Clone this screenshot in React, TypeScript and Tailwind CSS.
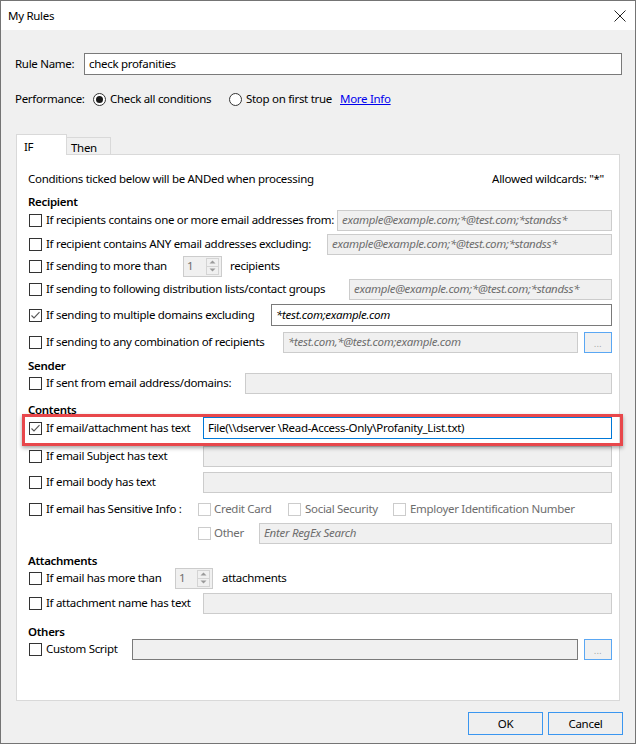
import React from "react";

function Check({ checked = false, disabled = false }: { checked?: boolean; disabled?: boolean }) {
  return (
    <span
      className={
        "w-[13px] h-[13px] shrink-0 border bg-white flex items-center justify-center " +
        (disabled ? "border-[#cccccc]" : "border-[#333333]")
      }
    >
      {checked && (
        <svg width="11" height="11" viewBox="0 0 11 11">
          <path d="M1.5 5.5 L4 8 L9.5 2.2" fill="none" stroke="#555555" strokeWidth="1.1" />
        </svg>
      )}
    </span>
  );
}

function Radio({ checked = false }: { checked?: boolean }) {
  return (
    <span className="w-[13px] h-[13px] shrink-0 rounded-full border border-[#333333] bg-white flex items-center justify-center">
      {checked && <span className="w-[7px] h-[7px] rounded-full bg-[#1a1a1a]" />}
    </span>
  );
}

function DisabledField({ className, text }: { className: string; text?: string }) {
  return (
    <div
      className={
        "h-[21px] shrink-0 border border-[#cccccc] bg-[#f0f0f0] flex items-center pl-[4px] italic text-[#6d6d6d] whitespace-nowrap overflow-hidden " +
        className
      }
    >
      {text}
    </div>
  );
}

function Spinner({ className }: { className: string }) {
  return (
    <div className={"h-[21px] shrink-0 border border-[#cccccc] bg-[#f0f0f0] flex items-stretch " + className}>
      <span className="flex-1 pl-[3px] text-[#6d6d6d] leading-[18px]">1</span>
      <span className="w-[13px] my-[1px] mr-[2px] flex flex-col border border-[#d4d4d4]">
        <span className="flex-1 flex items-center justify-center border-b border-[#d4d4d4]">
          <svg width="7" height="4" viewBox="0 0 7 4">
            <path d="M0.5 3.5 L3.5 0.5 L6.5 3.5 Z" fill="#9a9a9a" />
          </svg>
        </span>
        <span className="flex-1 flex items-center justify-center">
          <svg width="7" height="4" viewBox="0 0 7 4">
            <path d="M0.5 0.5 L3.5 3.5 L6.5 0.5 Z" fill="#9a9a9a" />
          </svg>
        </span>
      </span>
    </div>
  );
}

function DotsButton() {
  return (
    <div className="ml-[6px] w-[28px] h-[21px] shrink-0 border border-[#5aa7f3] bg-[#f0f0f0] flex items-end justify-center pb-[4px]">
      <span className="text-[8px] leading-[8px] text-[#9a9a9a] tracking-[0.5px]">...</span>
    </div>
  );
}

export default function App() {
  return (
    <div className="w-[636px] h-[744px] border border-[#747474] bg-[#f0f0f0] flex flex-col font-['Noto_Sans',sans-serif] text-[11.5px] tracking-[-0.3px] text-black leading-none overflow-hidden whitespace-nowrap">
      {/* Title bar */}
      <div className="h-[29px] bg-white flex items-center justify-between pl-[7px] pr-[9px] shrink-0">
        <span>My Rules</span>
        <svg width="12" height="12" viewBox="0 0 12 12">
          <path d="M0.5 0.5 L11.5 11.5 M11.5 0.5 L0.5 11.5" stroke="#222222" strokeWidth="1" />
        </svg>
      </div>

      {/* Rule name */}
      <div className="mt-[23px] h-[22px] flex items-center pl-[14px] shrink-0">
        <span className="w-[69px] shrink-0">Rule Name:</span>
        <div className="w-[538px] h-[22px] border border-[#7a7a7a] bg-white flex items-center pl-[4px]">
          check profanities
        </div>
      </div>

      {/* Performance */}
      <div className="mt-[14px] h-[20px] flex items-center pl-[14px] shrink-0">
        <span className="w-[78px] shrink-0">Performance:</span>
        <Radio checked />
        <span className="ml-[4px] w-[119px] shrink-0">Check all conditions</span>
        <Radio />
        <span className="ml-[4px] w-[94px] shrink-0">Stop on first true</span>
        <span className="text-[#0000ee] underline">More Info</span>
      </div>

      {/* Tabs */}
      <div className="mt-[25px] h-[21px] flex items-end pl-[15px] relative z-10 shrink-0">
        <div className="w-[51px] h-[21px] bg-white border-l border-t border-r border-[#d9d9d9] pl-[7px] pt-[6px]">IF</div>
        <div className="w-[44px] h-[17px] mb-[1px] bg-[#f0f0f0] border-t border-r border-[#d9d9d9] pl-[4px] pt-[4px]">Then</div>
      </div>

      {/* Panel */}
      <div className="ml-[15px] mt-[-1px] w-[604px] h-[547px] border border-[#d9d9d9] bg-white relative shrink-0">
        <div className="flex flex-col pl-[12px] pr-[7px]">
          <div className="mt-[15px] h-[18px] flex items-center justify-between pr-[8px]">
            <span className="ml-[-1px]">Conditions ticked below will be ANDed when processing</span>
            <span>Allowed wildcards: "*"</span>
          </div>

          <div className="mt-[7px] h-[14px] ml-[-1px] flex items-center font-semibold">Recipient</div>

          <div className="h-[22px] flex items-center">
            <Check />
            <span className="ml-[4px]">If recipients contains one or more email addresses from:</span>
            <DisabledField className="ml-auto w-[275px]" text="example@example.com;*@test.com;*standss*" />
          </div>

          <div className="mt-[2px] h-[22px] flex items-center">
            <Check />
            <span className="ml-[4px]">If recipient contains ANY email addresses excluding:</span>
            <DisabledField className="ml-auto w-[285px]" text="example@example.com;*@test.com;*standss*" />
          </div>

          <div className="h-[22px] flex items-center">
            <Check />
            <span className="ml-[4px] w-[137px] shrink-0">If sending to more than</span>
            <Spinner className="w-[39px]" />
            <span className="ml-[8px]">recipients</span>
          </div>

          <div className="mt-[1px] h-[22px] flex items-center">
            <Check />
            <span className="ml-[4px]">If sending to following distribution lists/contact groups</span>
            <DisabledField className="ml-auto w-[263px]" text="example@example.com;*@test.com;*standss*" />
          </div>

          <div className="mt-[4px] h-[22px] flex items-center">
            <Check checked />
            <span className="ml-[4px]">If sending to multiple domains excluding</span>
            <div className="ml-auto w-[341px] h-[22px] border border-[#7a7a7a] bg-white flex items-center pl-[4px] italic">
              *test.com;example.com
            </div>
          </div>

          <div className="mt-[5px] h-[22px] flex items-center">
            <Check />
            <span className="ml-[4px]">If sending to any combination of recipients</span>
            <DisabledField className="ml-auto w-[295px]" text="*test.com,*@test.com;example.com" />
            <DotsButton />
          </div>

          <div className="mt-[7px] h-[12px] ml-[-1px] flex items-center font-semibold">Sender</div>

          <div className="h-[22px] flex items-center">
            <Check />
            <span className="ml-[4px]">If sent from email address/domains:</span>
            <DisabledField className="ml-auto w-[367px]" />
          </div>

          <div className="mt-[10px] h-[12px] ml-[-1px] flex items-center font-semibold">Contents</div>

          <div className="mt-[1px] h-[22px] flex items-center">
            <Check checked />
            <span className="ml-[4px]">If email/attachment has text</span>
            <div className="ml-auto w-[409px] h-[22px] border border-[#0078d7] bg-white flex items-center pl-[4px]">
              {"File(\\\\dserver \\Read-Access-Only\\Profanity_List.txt)"}
            </div>
          </div>

          <div className="mt-[6px] h-[22px] flex items-center">
            <Check />
            <span className="ml-[4px]">If email Subject has text</span>
            <DisabledField className="ml-auto w-[409px]" />
          </div>

          <div className="mt-[4px] h-[22px] flex items-center">
            <Check />
            <span className="ml-[4px]">If email body has text</span>
            <DisabledField className="ml-auto w-[409px]" />
          </div>

          <div className="mt-[5px] h-[22px] flex items-center">
            <Check />
            <span className="ml-[4px] w-[152px] shrink-0">If email has Sensitive Info :</span>
            <Check disabled />
            <span className="ml-[3px] w-[74px] shrink-0 text-[#6d6d6d]">Credit Card</span>
            <Check disabled />
            <span className="ml-[4px] w-[88px] shrink-0 text-[#6d6d6d]">Social Security</span>
            <Check disabled />
            <span className="ml-[4px] text-[#6d6d6d]">Employer Identification Number</span>
          </div>

          <div className="mt-[2px] h-[22px] flex items-center">
            <span className="w-[169px] shrink-0" />
            <Check disabled />
            <span className="ml-[3px] w-[45px] shrink-0 text-[#6d6d6d]">Other</span>
            <DisabledField className="ml-auto w-[353px]" text="Enter RegEx Search" />
          </div>

          <div className="mt-[11px] h-[12px] ml-[-1px] flex items-center font-semibold">Attachments</div>

          <div className="h-[22px] flex items-center">
            <Check />
            <span className="ml-[4px] w-[129px] shrink-0">If email has more than</span>
            <Spinner className="w-[38px]" />
            <span className="ml-[9px]">attachments</span>
          </div>

          <div className="mt-[3px] h-[22px] flex items-center">
            <Check />
            <span className="ml-[4px]">If attachment name has text</span>
            <DisabledField className="ml-auto w-[409px]" />
          </div>

          <div className="mt-[12px] h-[12px] ml-[-1px] flex items-center font-semibold">Others</div>

          <div className="h-[22px] flex items-center">
            <Check />
            <span className="ml-[4px]">Custom Script</span>
            <div className="ml-auto w-[446px] h-[21px] border border-[#7a7a7a] bg-[#f0f0f0]" />
            <DotsButton />
          </div>
        </div>

        {/* Red highlight annotation */}
        <div className="absolute left-[5px] top-[259px] w-[601px] h-[32px] border-[3px] border-[#e8474b] shadow-[0_2px_4px_rgba(0,0,0,0.35)] pointer-events-none" />
      </div>

      {/* Buttons */}
      <div className="mt-[11px] flex justify-end gap-[5px] pr-[12px] shrink-0">
        <div className="w-[75px] h-[23px] border border-[#3a96f0] bg-[#efefef] flex items-center justify-center">OK</div>
        <div className="w-[75px] h-[23px] border border-[#3a96f0] bg-[#efefef] flex items-center justify-center">Cancel</div>
      </div>
    </div>
  );
}
